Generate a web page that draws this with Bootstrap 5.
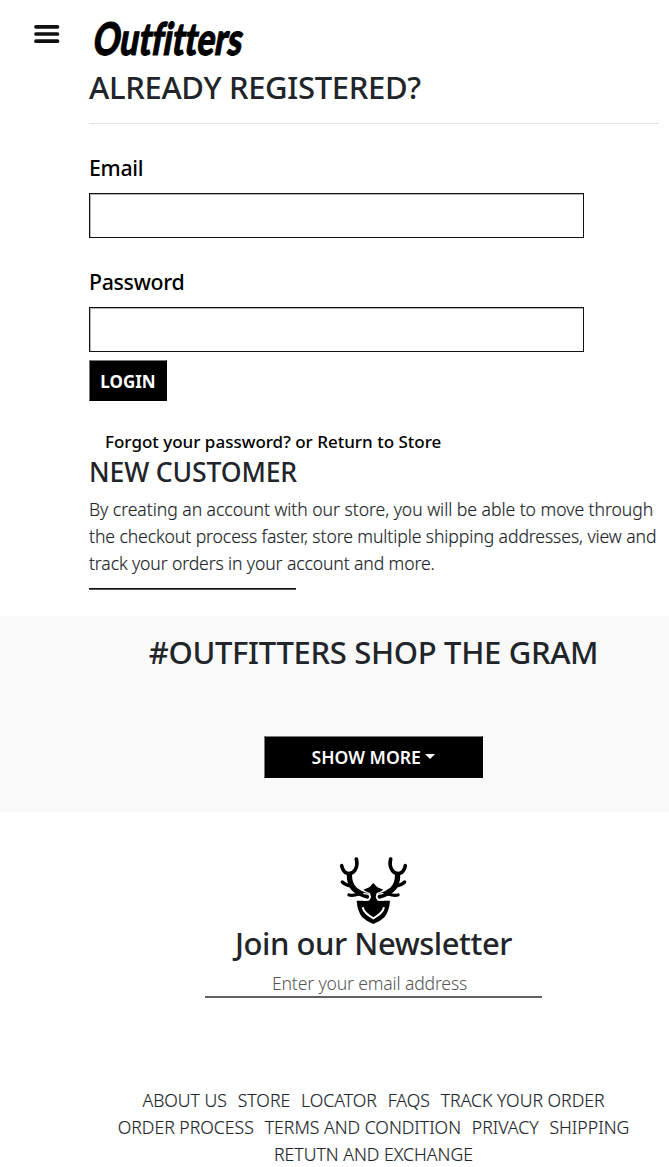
<!DOCTYPE html>
<html lang="en">
<head>
<meta charset="utf-8">
<meta name="viewport" content="width=device-width, initial-scale=1">
<title>Outfitters</title>
<link href="https://cdn.jsdelivr.net/npm/bootstrap@5.3.0/dist/css/bootstrap.min.css" rel="stylesheet">
<style>
body{font-family:"Noto Sans","Open Sans",sans-serif;font-size:17.6px;line-height:27px;color:#212529;overflow-x:hidden}
.site-head{height:67px;padding-left:34px}
.menu-btn{width:26px;height:20px;margin-top:24px}
.brand-logo{margin:12px 0 0 29px;overflow:visible}
.account{padding-left:89px}
h1,h2{font-weight:500;margin:0;white-space:nowrap}
.t-main{font-size:31px;line-height:40px;letter-spacing:-.33px}
.rule{width:570px;height:1px;background:#e3e4e5;margin-top:16px}
.field-label{font-size:21.3px;line-height:30px;font-weight:500;color:#000;display:block;margin:29px 0 10px;letter-spacing:-.3px}
.field-box{width:495px;height:45px;border:1px solid #111;border-radius:0;padding:0 10px;display:block;box-shadow:inset 1px 1px 0 #b5b5b5}
.btn-black,.btn-black:hover{background:#000;color:#fff;border:1px solid #777;border-right-color:#000;border-bottom-color:#000;border-radius:0;line-height:27px;padding:6px 0;white-space:nowrap}
.login{width:78px;height:41px;margin-top:8px;padding-top:7px;padding-bottom:5px;font-size:17px;font-weight:700}
.links{font-size:17px;font-weight:500;color:#000;margin:27px 0 0 16px;white-space:nowrap}
.links a{color:inherit;text-decoration:none}
.t-new{font-size:26.6px;line-height:32px;letter-spacing:-.15px;margin-top:1px}
.lite{font-weight:300}
.account .lite,.foot{-webkit-text-stroke:.15px #212529}
.lite span,.foot a{white-space:nowrap}
.ln1{letter-spacing:-.04px}
.ln2{letter-spacing:-.09px}
.ln3{letter-spacing:-.12px}
.short-rule{width:207px;height:2px;background:linear-gradient(#111 50%,#555 50%);margin-top:11px}
.gram{height:196px;background:#f9f9f9;margin-top:26px;padding:16px 0 0 78px}
.more{width:219px;height:42px;margin-top:64px;font-size:17.6px;font-weight:600}
.news{padding:38px 0 0 78px}
.news h2{margin-top:-7px;letter-spacing:-.45px}
.mail{width:337px;height:28px;border:0;border-bottom:2px solid #5f6164;border-radius:0;text-align:center;font-size:17.6px;font-weight:300;padding:0 8px 0 0;letter-spacing:-.16px;margin-top:7px}
.mail::placeholder{color:#555;opacity:1}
.foot{padding-left:78px;margin-top:89px;font-size:17.65px}
.foot div{column-gap:10.8px}
.foot a{color:#212529;text-decoration:none}
</style>
</head>
<body>
<header class="site-head d-flex align-items-start">
<svg class="menu-btn" viewBox="0 0 26 20"><path d="M2 2.8h21.5M2 10h21.5M2 17.2h21.5" stroke="#111" stroke-width="3.7" stroke-linecap="round"/></svg>
<svg class="brand-logo" width="160" height="50" viewBox="89 12 160 50"><g transform="translate(91.5 55) skewX(-10)"><text x="0" y="0" font-family="Lato, sans-serif" font-weight="900" font-size="45" stroke="#000" stroke-width="1.1" textLength="149" lengthAdjust="spacingAndGlyphs" style="font-variant-ligatures:none">Outfitters</text></g></svg>
</header>
<main class="account">
<h1 class="t-main">ALREADY REGISTERED?</h1>
<div class="rule"></div>
<form>
<label class="field-label" for="email">Email</label>
<input class="field-box" id="email" type="email">
<label class="field-label" for="pass">Password</label>
<input class="field-box" id="pass" type="password">
<button class="btn btn-black login d-block" type="button">LOGIN</button>
</form>
<div class="links"><a href="#">Forgot your password?</a> or <a href="#">Return to Store</a></div>
<h2 class="t-new">NEW CUSTOMER</h2>
<p class="lite mb-0 mt-2"><span class="ln1">By creating an account with our store, you will be able to move through</span><br><span class="ln2">the checkout process faster, store multiple shipping addresses, view and</span><br><span class="ln3">track your orders in your account and more.</span></p>
<div class="short-rule"></div>
</main>
<section class="gram text-center">
<h2 class="t-main">#OUTFITTERS SHOP THE GRAM</h2>
<button class="btn btn-black more dropdown-toggle" type="button">SHOW MORE</button>
</section>
<section class="news d-flex flex-column align-items-center">
<svg width="90" height="80" viewBox="0 0 270 240">
<g fill="none" stroke="#000" stroke-linecap="round" stroke-linejoin="round">
<g id="antler">
<path d="M82 27Q87 46 78 60Q72 69 61 71Q45 70 40 54L38 47" stroke-width="11"/>
<path d="M61 74Q61 104 78 119Q92 131 115 138" stroke-width="16"/>
<path d="M40 96Q50 106 70 109M60 135Q72 138 90 132" stroke-width="10"/>
</g>
<use href="#antler" transform="translate(267 0) scale(-1 1)"/>
</g>
<path d="M133 99L145 112L163 119Q152 127 143 129L140 142L146 152H183Q181 182 167 201Q154 214 133 222Q112 214 99 201Q85 182 83 152H120L126 142L123 129Q114 127 103 119L121 112Z"/>
<path d="M103 130L119 133Q125 139 121 146Q116 151 101 150M163 130L147 133Q141 139 145 146Q150 151 165 150" fill="none" stroke="#fff" stroke-width="4"/>
<path d="M101 172Q105 190 133 205Q161 190 165 172" fill="none" stroke="#fff" stroke-width="6"/>
</svg>
<h2 class="t-main">Join our Newsletter</h2>
<input class="mail" type="email" placeholder="Enter your email address">
</section>
<footer class="foot lite">
<div class="d-flex justify-content-center"><a href="#">ABOUT US</a><a href="#">STORE</a><a href="#">LOCATOR</a><a href="#">FAQS</a><a href="#">TRACK YOUR ORDER</a></div>
<div class="d-flex justify-content-center"><a href="#">ORDER PROCESS</a><a href="#">TERMS AND CONDITION</a><a href="#">PRIVACY</a><a href="#">SHIPPING</a></div>
<div class="d-flex justify-content-center"><a href="#">RETUTN AND EXCHANGE</a></div>
</footer>
<script src="https://cdn.jsdelivr.net/npm/bootstrap@5.3.0/dist/js/bootstrap.bundle.min.js"></script>
</body>
</html>
